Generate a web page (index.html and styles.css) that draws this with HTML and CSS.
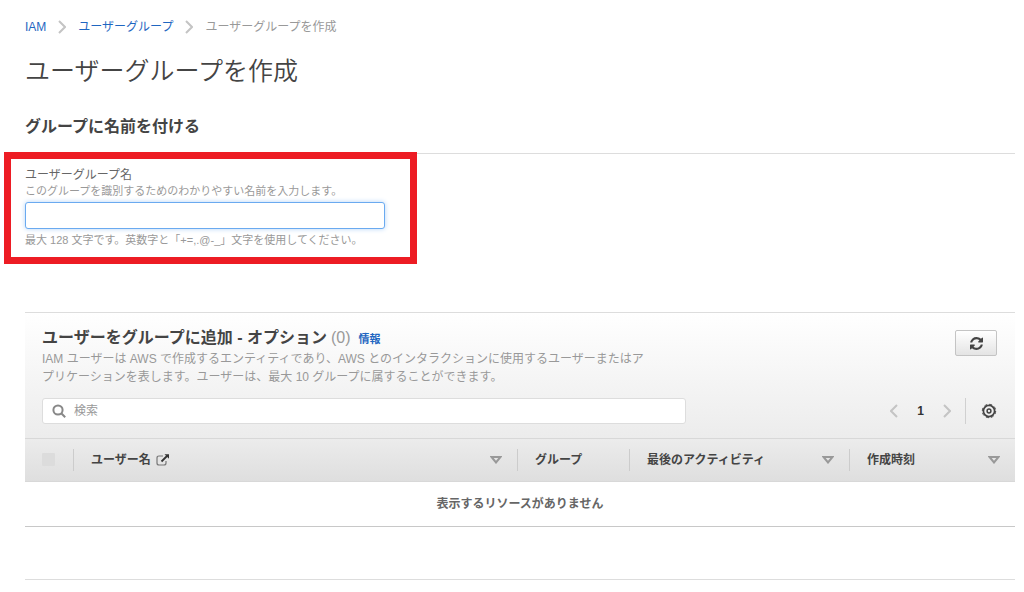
FILE: index.html
```html
<!DOCTYPE html>
<html lang="ja">
<head>
<meta charset="utf-8">
<title>ユーザーグループを作成</title>
<link rel="stylesheet" href="styles.css">
</head>
<body>
<main class="page">
  <nav class="breadcrumb" aria-label="パンくずリスト">
    <a href="#">IAM</a>
    <svg class="chevron" viewBox="0 0 8 14"><path d="M1 1l6 6-6 6"/></svg>
    <a href="#">ユーザーグループ</a>
    <svg class="chevron" viewBox="0 0 8 14"><path d="M1 1l6 6-6 6"/></svg>
    <span>ユーザーグループを作成</span>
  </nav>
  <h1 class="title">ユーザーグループを作成</h1>
  <h2 class="section-title">グループに名前を付ける</h2>
  <section class="name-form">
    <label class="label" for="group-name">ユーザーグループ名</label>
    <p class="hint">このグループを識別するためのわかりやすい名前を入力します。</p>
    <input class="name-input" id="group-name" type="text">
    <p class="hint">最大 128 文字です。英数字と「+=,.@-_」文字を使用してください。</p>
  </section>
  <section class="users">
    <div class="panel">
      <div class="panel-top">
        <div class="intro">
          <div class="panel-heading">
            <h2 class="panel-title">ユーザーをグループに追加 - オプション</h2>
            <span class="count">(0)</span>
            <a class="info" href="#">情報</a>
          </div>
          <p class="description">IAM ユーザーは AWS で作成するエンティティであり、AWS とのインタラクションに使用するユーザーまたはア<br>プリケーションを表します。ユーザーは、最大 10 グループに属することができます。</p>
        </div>
        <button class="refresh" type="button" aria-label="更新">
          <svg viewBox="0 0 1536 1536" width="13" height="13"><path fill="#444" d="M1511 928q0 5-1 7-64 268-268 434.500T764 1536q-146 0-282.500-55T238 1324l-129 129q-19 19-45 19t-45-19-19-45V960q0-26 19-45t45-19h448q26 0 45 19t19 45-19 45l-137 137q71 66 161 102t187 36q134 0 250-65t186-179q11-17 53-117 8-23 30-23h192q13 0 22.500 9.500t9.500 22.500zm25-800v448q0 26-19 45t-45 19h-448q-26 0-45-19t-19-45 19-45l138-138Q969 256 768 256q-134 0-250 65T332 500q-11 17-53 117-8 23-30 23H50q-13 0-22.500-9.500T18 608v-7q65-268 270-434.500T768 0q146 0 284 55.500T1297 212l130-129q19-19 45-19t45 19 19 45z"/></svg>
        </button>
      </div>
      <div class="tools">
        <div class="search">
          <svg viewBox="0 0 14 14" width="14" height="14"><g fill="none" stroke="#888" stroke-width="2"><circle cx="6" cy="6" r="4.600"/><path d="M9.500 9.500l3.700 3.700"/></g></svg>
          <input class="search-input" type="search" placeholder="検索" aria-label="検索">
        </div>
        <div class="pager">
          <button class="icon-button" type="button" aria-label="前へ"><svg class="chevron" viewBox="0 0 8 14"><path d="M7 1L1 7l6 6"/></svg></button>
          <button class="page-number" type="button">1</button>
          <button class="icon-button" type="button" aria-label="次へ"><svg class="chevron" viewBox="0 0 8 14"><path d="M1 1l6 6-6 6"/></svg></button>
          <button class="icon-button settings" type="button" aria-label="設定">
            <svg viewBox="0 0 16 16" width="16" height="16"><g fill="none" stroke="#444"><circle cx="8" cy="8" r="5.600" stroke-width="1.700"/><circle cx="8" cy="8" r="6.700" stroke-width="1" stroke-dasharray="3.200 2.062"/><circle cx="8" cy="8" r="1.900" stroke-width="1.500"/></g></svg>
          </button>
        </div>
      </div>
    </div>
    <table class="table">
      <colgroup><col class="col-check"><col><col class="col-group"><col class="col-activity"><col class="col-created"></colgroup>
      <thead>
        <tr>
          <th><input class="check" type="checkbox" disabled aria-label="すべて選択"></th>
          <th><div class="cell"><span>ユーザー名</span><svg viewBox="0 0 14 12" width="14" height="12"><g fill="none" stroke="#777" stroke-width="1.200"><path d="M7 2H3Q1 2 1 4v5q0 2 2 2h5q2 0 2-2V7"/><path d="M5.500 7.500L11 2" stroke="#333" stroke-width="1.800"/></g><path d="M8.500.3H13v4.500z" fill="#333"/></svg><svg class="sort" viewBox="0 0 12 8"><path d="M1.500 1h9L6 6.500z"/></svg></div></th>
          <th><div class="cell">グループ</div></th>
          <th><div class="cell">最後のアクティビティ<svg class="sort" viewBox="0 0 12 8"><path d="M1.500 1h9L6 6.500z"/></svg></div></th>
          <th><div class="cell">作成時刻<svg class="sort" viewBox="0 0 12 8"><path d="M1.500 1h9L6 6.500z"/></svg></div></th>
        </tr>
      </thead>
      <tbody><tr><td class="empty" colspan="5">表示するリソースがありません</td></tr></tbody>
    </table>
  </section>
  <hr class="divider">
</main>
</body>
</html>
```
FILE: styles.css
```css
* { box-sizing: border-box; }
body {
  margin: 0;
  background: #fff;
  color: #444;
  font: 12px/18px "Liberation Sans", "Noto Sans CJK JP", sans-serif;
}
h1, h2, p { margin: 0; }
button, input { font: inherit; color: inherit; }
a { color: #1f66c1; text-decoration: none; }
svg { flex: none; }
.page { padding: 18px 9px 0 25px; }
.breadcrumb { display: flex; align-items: center; gap: 12px; color: #999; }
.chevron { width: 8px; height: 14px; fill: none; stroke: #c4c4c4; stroke-width: 2; }
.title { margin-top: 17px; font-size: 25px; line-height: 36px; font-weight: 350; }
.section-title {
  margin-top: 26px;
  padding-bottom: 14px;
  border-bottom: 1px solid #ddd;
  font-size: 16px;
  line-height: 24px;
}
.name-form {
  position: relative;
  width: 360px;
  padding-top: 13px;
  display: flex;
  flex-direction: column;
}
.name-form::after {
  content: "";
  position: absolute;
  inset: -2px -32px -17px -21px;
  border: 7px solid #ed1c24;
  pointer-events: none;
}
.label { color: #666; line-height: 17px; }
.hint { color: #999; font-size: 11px; line-height: 14px; }
.name-input {
  height: 27px;
  margin: 4px 0;
  padding: 0 8px;
  border: 1px solid #6aaaf0;
  border-radius: 3px;
  box-shadow: 0 0 5px #b5d5f8;
  outline: 0;
}
.users { margin-top: 65px; }
.panel {
  padding: 14px 18px 14px 17px;
  border-top: 1px solid #ddd;
  background: linear-gradient(#fff, #ececec);
}
.panel-top { display: flex; justify-content: space-between; gap: 24px; }
.panel-heading { display: flex; align-items: baseline; gap: 4px; line-height: 22px; }
.panel-title { font-size: 16px; line-height: 22px; }
.count { color: #999; font-size: 16px; }
.info { margin-left: 4px; font-size: 11px; font-weight: 700; }
.description { color: #999; }
.refresh {
  display: flex;
  align-items: center;
  justify-content: center;
  width: 42px;
  height: 26px;
  margin-top: 3px;
  border: 1px solid #c4c4c4;
  border-radius: 2px;
  background: linear-gradient(#fff, #e4e4e4);
}
.tools { display: flex; justify-content: space-between; align-items: center; margin-top: 12px; }
.search {
  display: flex;
  align-items: center;
  gap: 8px;
  flex: 0 1 644px;
  height: 26px;
  padding: 0 9px;
  border: 1px solid #ddd;
  border-radius: 3px;
  background: #fff;
}
.search-input { flex: 1; min-width: 0; padding: 0; border: 0; background: none; outline: 0; }
.search-input::placeholder { color: #999; }
.pager { display: flex; align-items: center; }
.icon-button, .page-number { display: flex; align-items: center; padding: 0; border: 0; background: none; }
.page-number { padding: 0 19px; color: #333; font-weight: 700; }
.settings { height: 26px; margin-left: 14px; padding-left: 15px; border-left: 1px solid #d0d0d0; }
.table { width: 100%; table-layout: fixed; border-collapse: separate; border-spacing: 0; }
.col-check { width: 48px; }
.col-group { width: 112px; }
.col-activity { width: 220px; }
.col-created { width: 166px; }
.table thead { background: linear-gradient(#ececec, #dedede); }
.table th {
  height: 44px;
  padding: 0;
  border-top: 1px solid #d8d8d8;
  border-bottom: 1px solid #d8d8d8;
  text-align: left;
}
.cell { display: flex; align-items: center; gap: 5px; height: 22px; padding: 0 15px 0 17px; }
.table th + th .cell { border-left: 1px solid #ccc; }
.sort { width: 12px; height: 8px; margin-left: auto; fill: none; stroke: #999; stroke-width: 2; }
.check {
  display: block;
  appearance: none;
  width: 13px;
  height: 13px;
  margin: 0 0 2px 17px;
  border-radius: 1px;
  background: #dcdcdc;
}
.empty {
  height: 45px;
  padding: 0;
  border-bottom: 1px solid #c8c8c8;
  color: #666;
  font-weight: 700;
  text-align: center;
}
.divider { margin: 52px 0 0; border: 0; border-top: 1px solid #ddd; }
```
